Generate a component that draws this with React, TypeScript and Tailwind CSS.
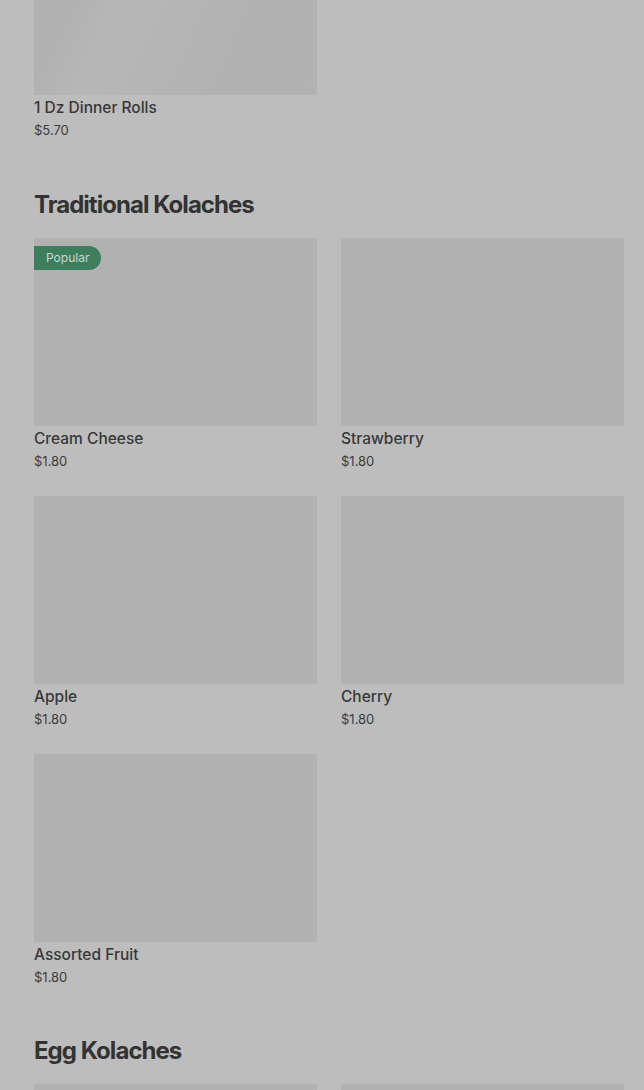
import React from 'react';

type Item = { name: string; price: string; popular?: boolean };

const traditional: Item[] = [
  { name: 'Cream Cheese', price: '$1.80', popular: true },
  { name: 'Strawberry', price: '$1.80' },
  { name: 'Apple', price: '$1.80' },
  { name: 'Cherry', price: '$1.80' },
  { name: 'Assorted Fruit', price: '$1.80' },
];

function ItemCard({ item, shimmer }: { item: Item; shimmer?: boolean }) {
  return (
    <div className="flex flex-col">
      <div
        className={
          'relative h-[188px] w-full ' +
          (shimmer
            ? 'bg-[linear-gradient(115deg,#b1b1b1_0%,#b1b1b1_22%,#b7b7b7_36%,#b4b4b4_56%,#b1b1b1_76%,#b2b2b2_100%)]'
            : 'bg-[#b1b1b1]')
        }
      >
        {item.popular && (
          <span className="absolute left-0 top-2 flex h-6 items-center rounded-r-full bg-[#3f7e5d] pl-3 pr-3 text-[12px] text-[#c8d8cf]">
            Popular
          </span>
        )}
      </div>
      <div className="mt-[1px] text-[15.5px] leading-6 font-medium text-[#383838]">{item.name}</div>
      <div className="text-[13px] leading-[21px] text-[#3c3c3c]">{item.price}</div>
    </div>
  );
}

export default function App() {
  return (
    <div
      className="min-h-[1090px] overflow-hidden bg-[#bdbdbd] pl-[34px] pr-[20px]"
      style={{ fontFamily: 'Inter, "Noto Sans", sans-serif' }}
    >
      {/* previous section, scrolled mostly out of view */}
      <div className="-mt-[93px] grid grid-cols-2 gap-x-6">
        <ItemCard item={{ name: '1 Dz Dinner Rolls', price: '$5.70' }} shimmer />
      </div>

      <h2 className="mt-[49px] mb-[18px] text-[24px] leading-[30px] font-bold tracking-[-0.04em] text-[#333333]">
        Traditional Kolaches
      </h2>
      <div className="grid grid-cols-2 gap-x-6 gap-y-6">
        {traditional.map((it) => (
          <ItemCard key={it.name} item={it} />
        ))}
      </div>

      <h2 className="mt-[48px] mb-[18px] text-[24px] leading-[30px] font-bold tracking-[-0.04em] text-[#333333]">
        Egg Kolaches
      </h2>
      <div className="grid grid-cols-2 gap-x-6">
        <div className="h-[188px] bg-[#b1b1b1]" />
        <div className="h-[188px] bg-[#b1b1b1]" />
      </div>
    </div>
  );
}
